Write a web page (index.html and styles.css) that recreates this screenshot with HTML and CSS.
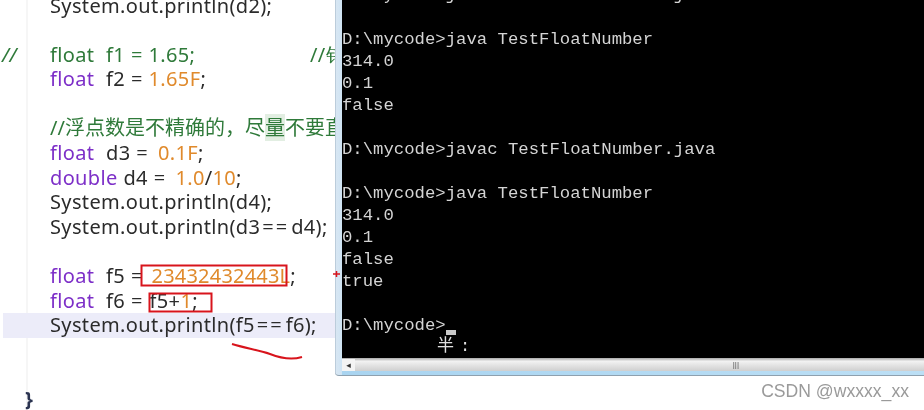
FILE: index.html
```html
<!DOCTYPE html>
<html lang="zh">
<head>
<meta charset="utf-8">
<title>TestFloatNumber</title>
<link rel="stylesheet" href="styles.css">
</head>
<body>
<div class="stage">
  <main class="editor">
    <div class="line"><span class="code">System.out.println(d2);</span></div>
    <div class="line"></div>
    <div class="line old"><span class="mark">//</span><span class="code">float&nbsp; f1 = 1.65;</span><span class="tail">//针</span></div>
    <div class="line"><span class="code"><b class="kw">float</b>&nbsp; f2 = <b class="num">1.65F</b>;</span></div>
    <div class="line"></div>
    <div class="line old"><span class="code cjk">//浮点数是不精确的，尽<i class="sel">量</i>不要直接比较</span></div>
    <div class="line"><span class="code"><b class="kw">float</b>&nbsp; d3 = <b class="num gap">0.1F</b>;</span></div>
    <div class="line"><span class="code"><b class="kw">double</b> d4 = <b class="num gap">1.0</b>/<b class="num">10</b>;</span></div>
    <div class="line"><span class="code">System.out.println(d4);</span></div>
    <div class="line"><span class="code">System.out.println(d3<i class="eq">==</i>d4);</span></div>
    <div class="line"></div>
    <div class="line"><span class="code"><b class="kw">float</b>&nbsp; f5 = <b class="num big">23432432443L</b>;</span></div>
    <div class="line"><span class="code"><b class="kw">float</b>&nbsp; f6 = <i class="sum">f5+</i><b class="num">1</b>;</span></div>
    <div class="line current"><span class="code">System.out.println(f5<i class="eq">==</i>f6);</span></div>
    <div class="line"></div>
    <div class="line"></div>
    <div class="line"><span class="brace">}</span></div>
  </main>
  <section class="console">
    <pre class="screen"><code class="output">D:\mycode&gt;javac TestFloatNumber.java

D:\mycode&gt;java TestFloatNumber
314.0
0.1
false

D:\mycode&gt;javac TestFloatNumber.java

D:\mycode&gt;java TestFloatNumber
314.0
0.1
false
true

D:\mycode&gt;<span class="caret"></span></code></pre>
    <div class="ime">半<span class="colon">:</span></div>
    <div class="hbar">
      <span class="arrow">◂</span>
      <span class="thumb">
        <span class="grip">|||</span>
      </span>
    </div>
    <div class="frame"></div>
  </section>
  <svg class="ink" width="340" height="410" viewBox="0 0 340 410" aria-hidden="true">
    <rect x="141.500" y="265.500" width="145" height="20" />
    <rect x="149.500" y="293.500" width="62" height="18" />
    <path d="M232 344 C245 348 258 350 270 354 C280 358 292 360 302 357" />
    <path class="plus" d="M333 274h7M336.500 271v6" />
  </svg>
  <div class="credit">CSDN @wxxxx_xx</div>
</div>
</body>
</html>
```

FILE: styles.css
```css
* { box-sizing: border-box; }
html, body { margin: 0; padding: 0; background: #fff; }
.stage {
  position: relative;
  width: 924px;
  height: 410px;
  overflow: hidden;
  background: #fff;
  filter: blur(0.4px);
}
.editor {
  position: relative;
  height: 410px;
  width: 340px;
  overflow: hidden;
  font-family: "Noto Sans", sans-serif;
  font-size: 20px;
  letter-spacing: 0.35px;
  word-spacing: 0.3px;
  color: #2b2b2b;
  background: linear-gradient(to right, #fff 0, #fff 26px, #f6f6f6 26px, #f6f6f6 28px, #fff 28px);
}
.line {
  display: flex;
  height: 24.600px;
  line-height: 24.600px;
  white-space: nowrap;
  position: relative;
}
.line:first-child { margin-top: -6.500px; }
.code { padding-left: 50px; }
.kw { font-weight: 400; color: #7d2fc8; }
.num { font-weight: 400; color: #e08a2c; }
.gap { margin-left: 4px; }
.big { margin-left: 3px; letter-spacing: 0.2px; }
.sum { font-style: normal; margin-left: 1px; }
.eq { font-style: normal; letter-spacing: 2px; margin: 0 2px; }
.sel { font-style: normal; background: #e2eee2; }
.old { color: #2f7a3a; }
.mark { position: absolute; left: 2px; font-style: italic; }
.tail { position: absolute; left: 310px; }
.cjk { font-family: "Noto Sans", "Noto Sans CJK SC", sans-serif; letter-spacing: 0; }
.current { background: #ececf9; margin-left: 3px; width: 332px; }
.current .code { padding-left: 47px; }
.brace { padding-left: 25px; font-weight: 700; color: #2a3350; }
.ink { position: absolute; left: 0; top: 0; }
.ink rect, .ink path { fill: none; stroke: #d8141c; stroke-width: 2; }
.ink .plus { stroke-width: 1.500; }
.console {
  position: absolute;
  left: 335px;
  top: 0;
  width: 589px;
  height: 376px;
  display: flex;
  flex-direction: column;
  padding-left: 7px;
  background: linear-gradient(to right, #9fb3c4 0, #d8e6f2 1px, #cfe4f4 7px);
  border-bottom: 1px solid #8ea0ae;
  border-bottom-left-radius: 4px;
}
.screen {
  margin: 0;
  height: 358px;
  background: #000;
  color: #d4d4d4;
  font-family: "Liberation Mono", monospace;
  font-size: 17.300px;
  line-height: 22px;
  overflow: hidden;
  flex: none;
}
.output {
  display: block;
  margin-top: -15px;
  font: inherit;
}
.caret {
  display: inline-block;
  width: 10px;
  height: 5px;
  background: #c8c8c8;
  vertical-align: -5px;
}
.ime {
  position: absolute;
  left: 102px;
  top: 333px;
  color: #e0e0e0;
  font-family: "Noto Sans CJK SC", sans-serif;
  font-size: 17px;
  line-height: 22px;
}
.colon { margin-left: 6px; font-family: "Liberation Mono", monospace; }
.hbar {
  height: 13px;
  display: flex;
  align-items: center;
  background: linear-gradient(#a8a8a8, #f2f2f2 25%, #cfcfcf);
  flex: none;
  position: relative;
}
.arrow {
  width: 13px;
  height: 12px;
  font-size: 9px;
  line-height: 12px;
  text-align: center;
  background: #f4f4f4;
  color: #333;
  font-family: "DejaVu Sans", sans-serif;
}
.thumb {
  position: absolute;
  left: 14px;
  right: 0;
  top: 0;
  bottom: 0;
  display: flex;
  justify-content: flex-end;
  padding-right: 185px;
  align-items: center;
}
.grip { font-size: 8px; color: #555; font-family: "Liberation Sans", sans-serif; }
.frame { flex: 1; background: linear-gradient(to right, #a9d4f0, #bcdff5); }
.credit {
  position: absolute;
  right: 15px;
  bottom: 9px;
  font-family: "Liberation Sans", sans-serif;
  font-size: 17.600px;
  line-height: 20px;
  color: #9a9a9a;
}
```
